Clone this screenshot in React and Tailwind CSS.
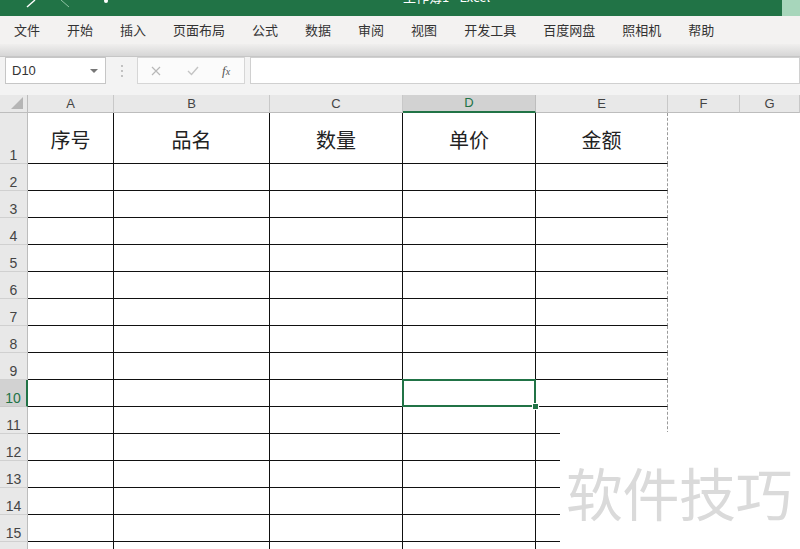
import React from 'react'

const menu = ['文件', '开始', '插入', '页面布局', '公式', '数据', '审阅', '视图', '开发工具', '百度网盘', '照相机', '帮助']
const cols = ['A', 'B', 'C', 'D', 'E', 'F', 'G']
const heads = ['序号', '品名', '数量', '单价', '金额']
const rows = Array.from({ length: 16 }, (_, i) => i + 1)

const cjk = { fontFamily: '"Noto Sans CJK SC", "Noto Sans", sans-serif' }
const latin = { fontFamily: '"Liberation Sans", Arial, sans-serif' }

function ColHeader({ name }) {
  const active = name === 'D'
  return (
    <div
      className={`flex items-center justify-center border-r border-b text-[13px] ${
        active
          ? 'bg-[#d2d2d2] text-[#217346] border-b-2 border-b-[#217346] border-r-[#bdbdbd]'
          : 'bg-[#e8e8e8] text-[#444] border-r-[#c8c8c8] border-b-[#bdbdbd]'
      }`}
      style={latin}
    >
      {name}
    </div>
  )
}

function RowHeader({ n }) {
  const active = n === 10
  return (
    <div
      className={`flex items-end justify-center border-b pb-[1px] text-[14px] leading-none ${
        active
          ? 'bg-[#d2d2d2] text-[#217346] border-r-2 border-r-[#217346] border-b-[#c8c8c8]'
          : 'bg-[#e8e8e8] text-[#444] border-r border-r-[#bdbdbd] border-b-[#d0d0d0]'
      }`}
      style={latin}
    >
      {n}
    </div>
  )
}

function Cell({ r, c }) {
  if (c >= 5) return <div className="bg-white" />
  const isE = c === 4
  const selected = r === 10 && c === 3
  return (
    <div
      className={`relative flex items-center justify-center bg-white border-b border-b-[#111] border-r ${
        isE ? '[border-right-style:dashed] border-r-[#9a9a9a]' : 'border-r-[#111]'
      } ${selected ? 'z-10' : ''}`}
    >
      {r === 1 && (
        <span className="pt-[4px] text-[20px] text-[#222]" style={cjk}>
          {heads[c]}
        </span>
      )}
      {selected && (
        <div className="absolute -left-[1px] -top-[1px] -right-[1px] -bottom-[1px] border-2 border-[#217346]">
          <div className="absolute -right-[5px] -bottom-[5px] h-[7px] w-[7px] bg-[#217346] border border-white" />
        </div>
      )}
    </div>
  )
}

export default function App() {
  return (
    <div className="relative h-[549px] w-[800px] overflow-hidden bg-white" style={cjk}>
      {/* title bar */}
      <div className="relative flex h-[16px] overflow-hidden bg-[#217346]">
        <svg className="absolute left-0 top-0" width="120" height="16" viewBox="0 0 120 16">
          <path d="M27 7 L35 0" stroke="#fff" strokeWidth="1.4" />
          <path d="M61 0 L69 7" stroke="#8fc3a4" strokeWidth="1" />
          <circle cx="106" cy="1" r="2" fill="#fff" />
        </svg>
        <div className="absolute left-[403px] -top-[13px] text-[13px] text-white">工作簿1 - Excel</div>
        <div className="absolute right-0 top-0 h-[16px] w-[18px] bg-[#a7d6bb]" />
      </div>

      {/* menu */}
      <div className="flex h-[28px] items-center gap-[27px] bg-[#f3f2f1] pl-[14px] text-[13px] text-[#333]">
        {menu.map((m) => (
          <span key={m}>{m}</span>
        ))}
      </div>
      <div className="h-[13px] border-b border-b-[#c6c6c6] bg-gradient-to-b from-[#f0efee] to-[#d6d6d6]" />

      {/* formula bar */}
      <div className="flex h-[38px] items-start bg-[#f3f3f3]">
        <div
          className="ml-[5px] flex h-[27px] w-[101px] items-center justify-between border border-[#c6c6c6] bg-white pl-[6px] pr-[7px] text-[13px] text-[#333]"
          style={latin}
        >
          <span>D10</span>
          <span className="h-0 w-0 border-x-[4px] border-t-[4px] border-x-transparent border-t-[#777]" />
        </div>
        <div className="flex h-[27px] w-[31px] items-center justify-center">
          <svg width="2" height="12" viewBox="0 0 2 12">
            <circle cx="1" cy="1" r="0.9" fill="#aaa" />
            <circle cx="1" cy="6" r="0.9" fill="#aaa" />
            <circle cx="1" cy="11" r="0.9" fill="#aaa" />
          </svg>
        </div>
        <div className="flex h-[27px] w-[108px] items-center border border-[#d6d6d6] bg-[#fbfbfb]">
          <svg className="ml-[13px]" width="10" height="10" viewBox="0 0 10 10">
            <path d="M1 1 L9 9 M9 1 L1 9" stroke="#b8b8b8" strokeWidth="1.2" />
          </svg>
          <svg className="ml-[26px]" width="12" height="10" viewBox="0 0 12 10">
            <path d="M1 5 L4.5 8.5 L11 1" stroke="#c4c4c4" strokeWidth="1.4" fill="none" />
          </svg>
          <span
            className="ml-[23px] text-[13px] italic text-[#555]"
            style={{ fontFamily: '"Liberation Serif", "Times New Roman", serif' }}
          >
            f<span className="text-[10px]">x</span>
          </span>
        </div>
        <div className="ml-[5px] h-[27px] flex-1 border border-[#d0d0d0] bg-white" />
      </div>

      {/* sheet */}
      <div className="grid grid-cols-[28px_86px_156px_133px_133px_132px_72px_1fr] grid-rows-[18px_51px_repeat(15,27px)]">
        <div className="relative border-r border-b border-[#bdbdbd] bg-[#e8e8e8]">
          <div
            className="absolute bottom-[3px] right-[4px] h-0 w-0"
            style={{ borderBottom: '12px solid #b5b5b5', borderLeft: '12px solid transparent' }}
          />
        </div>
        {cols.map((c) => (
          <ColHeader key={c} name={c} />
        ))}
        {rows.map((r) => (
          <React.Fragment key={r}>
            <RowHeader n={r} />
            {cols.map((c, i) => (
              <Cell key={c} r={r} c={i} />
            ))}
          </React.Fragment>
        ))}
      </div>

      {/* watermark */}
      <div className="absolute left-[560px] top-[432px] z-20 flex h-[117px] w-[240px] items-center bg-white pl-[6px] pt-[2px]">
        <span className="text-[57px] leading-none tracking-[-0.5px] text-[#dadada]" style={cjk}>
          软件技巧
        </span>
      </div>
    </div>
  )
}
